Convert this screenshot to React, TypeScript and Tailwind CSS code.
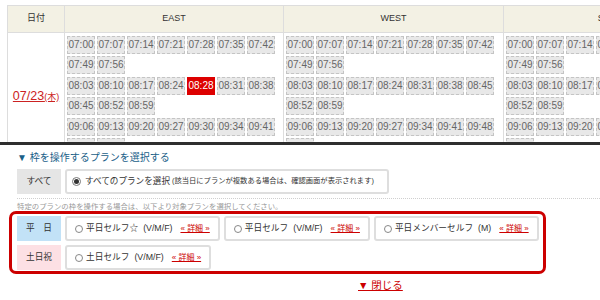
import React from "react";

type SlotT = { t: string; on?: boolean };

function Slot({ t, on }: SlotT) {
  return on ? (
    <div className="w-[28px] h-[18px] flex items-center justify-center text-[10px] leading-none bg-[#dd0000] text-white border border-[#dd0000]">
      {t}
    </div>
  ) : (
    <div className="w-[28px] h-[18px] flex items-center justify-center text-[10px] leading-none bg-[#e8e8e8] text-[#666] border border-dashed border-[#c4c4c4]">
      {t}
    </div>
  );
}

function Col({ groups, wide }: { groups: SlotT[][]; wide?: boolean }) {
  return (
    <div
      className={
        (wide ? "w-[220px]" : "w-[219px]") +
        " shrink-0 border-r border-[#ddd] pl-[2px] pt-[3px] flex flex-col gap-[3px]"
      }
    >
      {groups.map((g, i) => (
        <div key={i} className="flex flex-wrap gap-[2px]">
          {g.map((s, j) => (
            <Slot key={j} t={s.t} on={s.on} />
          ))}
        </div>
      ))}
    </div>
  );
}

const s = (arr: string[]): SlotT[] => arr.map((t) => ({ t }));

const east: SlotT[][] = [
  s(["07:00", "07:07", "07:14", "07:21", "07:28", "07:35", "07:42", "07:49", "07:56"]),
  [
    ...s(["08:03", "08:10", "08:17", "08:24"]),
    { t: "08:28", on: true },
    ...s(["08:31", "08:38", "08:45", "08:52", "08:59"]),
  ],
  s(["09:06", "09:13", "09:20", "09:27", "09:30", "09:34", "09:41", "09:48", "09:55"]),
];

const west: SlotT[][] = [
  s(["07:00", "07:07", "07:14", "07:21", "07:28", "07:35", "07:42", "07:49", "07:56"]),
  s(["08:03", "08:10", "08:17", "08:24", "08:31", "08:38", "08:45", "08:52", "08:59"]),
  s(["09:06", "09:13", "09:20", "09:27", "09:34", "09:41", "09:48", "09:55"]),
];

function PlanBox({ name, spec }: { name: string; spec: string }) {
  return (
    <div className="h-[25px] border-2 border-[#dedede] rounded-[3px] flex items-center pl-[8px] pr-[8px] bg-white">
      <span className="w-[8px] h-[8px] rounded-full border border-[#888] bg-white mr-[3px] shrink-0"></span>
      <span className="text-[8.7px] text-[#333] whitespace-nowrap">{name}</span>
      <span className="text-[8.8px] text-[#333] ml-[5px] whitespace-nowrap">{spec}</span>
      <span className="text-[8px] text-[#cc0000] underline ml-[8px] whitespace-nowrap">« 詳細 »</span>
    </div>
  );
}

export default function App() {
  return (
    <div className="w-[600px] h-[300px] bg-white overflow-hidden font-['Liberation_Sans','Noto_Sans_CJK_JP',sans-serif]">
      {/* schedule table */}
      <div className="h-[145px] overflow-hidden border-b-[3px] border-[#2e2e2e] pt-[5px] pl-[7px]">
        <div className="w-max flex flex-col border-t border-l border-[#ddd]">
          <div className="flex h-[27px] border-b border-[#ddd] bg-[#f3f1e4] text-[9px] text-[#333]">
            <div className="w-[57px] border-r border-[#ddd] flex items-center justify-center">日付</div>
            <div className="w-[219px] border-r border-[#ddd] flex items-center justify-center">EAST</div>
            <div className="w-[220px] border-r border-[#ddd] flex items-center justify-center">WEST</div>
            <div className="w-[220px] border-r border-[#ddd] flex items-center justify-center">SOUTH</div>
          </div>
          <div className="flex h-[200px] bg-white">
            <div className="w-[57px] border-r border-[#ddd] flex justify-center pt-[56px]">
              <a className="text-[#cc2222] underline text-[12.5px] leading-[14px] whitespace-nowrap">
                07/23<span className="text-[9px]">(木)</span>
              </a>
            </div>
            <Col groups={east} />
            <Col groups={west} wide />
            <Col groups={west} wide />
          </div>
        </div>
      </div>

      {/* plan selection */}
      <div className="pl-[17px] pt-[6px]">
        <div className="text-[10px] leading-[14px] text-[#1a6088] whitespace-nowrap">▼ 枠を操作するプランを選択する</div>
        <div className="flex gap-[4px] mt-[4px] h-[25px]">
          <div className="w-[44px] bg-[#e5e5e5] flex items-center justify-center text-[8.7px] text-[#333]">すべて</div>
          <div className="w-[324px] border-2 border-[#dedede] rounded-[3px] flex items-center pl-[5px]">
            <span className="w-[9px] h-[9px] rounded-full border border-[#777] flex items-center justify-center mr-[4px] shrink-0">
              <span className="w-[5px] h-[5px] rounded-full bg-[#333]"></span>
            </span>
            <span className="text-[8.6px] text-[#333] whitespace-nowrap">すべてのプランを選択</span>
            <span className="text-[7.3px] text-[#333] ml-[2px] whitespace-nowrap">(該当日にプランが複数ある場合は、確認画面が表示されます)</span>
          </div>
        </div>
        <div className="mt-[4px] border-t border-dotted border-[#cfcfcf]"></div>
        <div className="mt-[3px] text-[7.4px] leading-[9px] text-[#999] whitespace-nowrap">
          特定のプランの枠を操作する場合は、以下より対象プランを選択してください。
        </div>
      </div>

      <div className="ml-[9px] w-[537px] border-[3px] border-[#cc0000] rounded-[7px] pl-[5px] pt-[2px] pb-[1px] flex flex-col gap-[4px]">
        <div className="flex gap-[4px] h-[25px]">
          <div className="w-[44px] bg-[#c2e2f7] flex items-center justify-center text-[8.7px] text-[#333] whitespace-pre">平　日</div>
          <PlanBox name="平日セルフ☆" spec="(V/M/F)" />
          <PlanBox name="平日セルフ" spec="(V/M/F)" />
          <PlanBox name="平日メンバーセルフ" spec="(M)" />
        </div>
        <div className="flex gap-[4px] h-[25px]">
          <div className="w-[44px] bg-[#fde0e4] flex items-center justify-center text-[8.7px] text-[#333]">土日祝</div>
          <PlanBox name="土日セルフ" spec="(V/M/F)" />
        </div>
      </div>

      <div className="ml-[358px] mt-[4px] text-[10.5px] leading-[14px] text-[#cc0000] underline whitespace-nowrap">▼ 閉じる</div>
    </div>
  );
}
